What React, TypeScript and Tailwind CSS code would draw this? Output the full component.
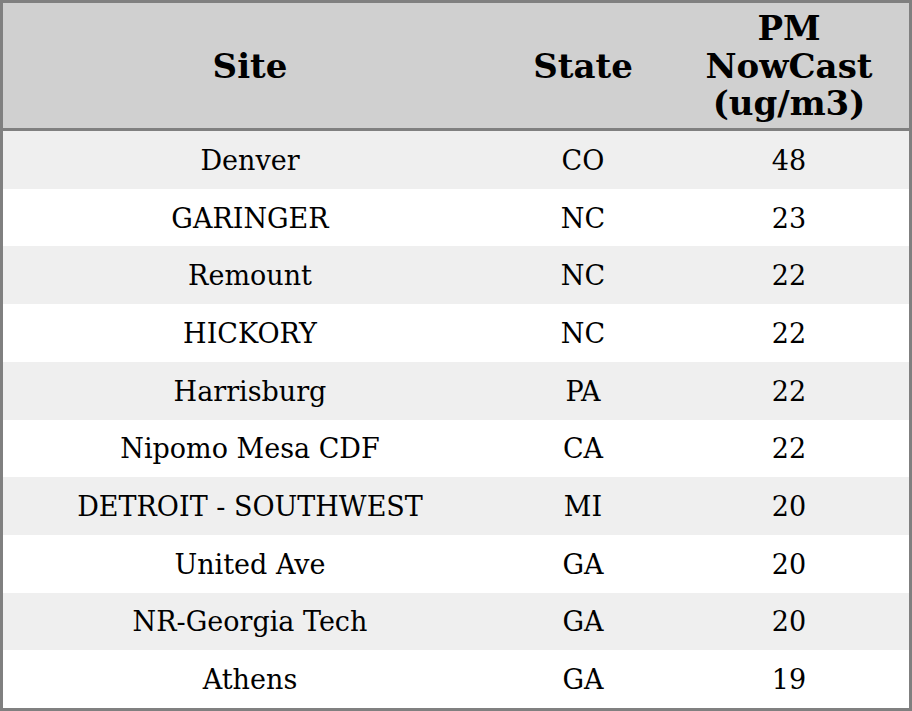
import React from "react";

const rows: [string, string, string][] = [
  ["Denver", "CO", "48"],
  ["GARINGER", "NC", "23"],
  ["Remount", "NC", "22"],
  ["HICKORY", "NC", "22"],
  ["Harrisburg", "PA", "22"],
  ["Nipomo Mesa CDF", "CA", "22"],
  ["DETROIT - SOUTHWEST", "MI", "20"],
  ["United Ave", "GA", "20"],
  ["NR-Georgia Tech", "GA", "20"],
  ["Athens", "GA", "19"],
];

export default function App() {
  return (
    <div
      className="w-[912px] h-[711px] border-[3px] border-[#808080] bg-white text-black flex flex-col"
      style={{ fontFamily: '"DejaVu Serif", serif' }}
    >
      <div className="grid grid-cols-[494px_172px_240px] h-[125px] bg-[#d0d0d0] border-b-[3px] border-[#808080] box-content font-bold text-[34px] leading-[37.5px]">
        <div className="flex items-center justify-center text-center pt-[2px]">Site</div>
        <div className="flex items-center justify-center text-center pt-[2px]">State</div>
        <div className="flex items-center justify-center text-center pt-[2px]">
          PM
          <br />
          NowCast
          <br />
          (ug/m3)
        </div>
      </div>
      <div className="flex flex-col flex-1">
        {rows.map((r, i) => (
          <div
            key={i}
            className={`grid grid-cols-[494px_172px_240px] flex-1 text-[27px] leading-[32px] pt-[2px] ${
              i % 2 === 0 ? "bg-[#efefef]" : "bg-white"
            }`}
          >
            <div className="flex items-center justify-center">{r[0]}</div>
            <div className="flex items-center justify-center">{r[1]}</div>
            <div className="flex items-center justify-center">{r[2]}</div>
          </div>
        ))}
      </div>
    </div>
  );
}
